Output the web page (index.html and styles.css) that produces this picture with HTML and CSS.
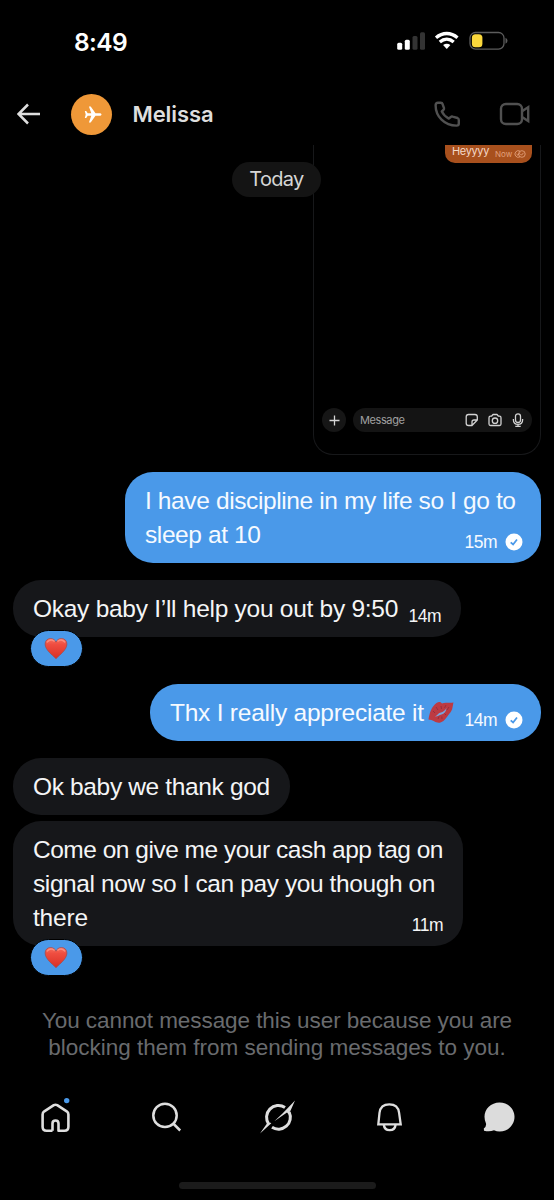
FILE: index.html
```html
<!DOCTYPE html>
<html lang="en">
<head>
<meta charset="utf-8">
<title>Melissa</title>
<link rel="stylesheet" href="styles.css">
</head>
<body>
<div class="screen">
  <div class="status">
    <span class="clock">8:49</span>
    <svg class="status-icons" width="112" height="20" viewBox="0 0 112 20">
      <rect x="1.200" y="11.800" width="5" height="7" rx="1.500" fill="#fff"/>
      <rect x="8.800" y="8.800" width="5" height="10" rx="1.500" fill="#fff"/>
      <rect x="16.500" y="5" width="5" height="13.800" rx="1.500" fill="#333"/>
      <rect x="24" y="1.300" width="5" height="17.500" rx="1.500" fill="#333"/>
      <g fill="none" stroke="#fff" stroke-width="3.300">
        <path d="M40 6.700C46.500 1.100 55 1.100 61.500 6.700"/>
        <path d="M43.800 11C48 7.300 53.500 7.300 57.700 11"/>
      </g>
      <path d="M47.100 14.100C49.500 12.200 52 12.200 54.400 14.100L50.750 18Z" fill="#fff"/>
      <rect x="74" y="1.500" width="34" height="16.600" rx="5.500" fill="none" stroke="#5c5c5c" stroke-width="1.300"/>
      <rect x="75.900" y="3.300" width="10.500" height="13" rx="3.500" fill="#fbd83c"/>
      <path d="M109.500 6.800Q111.500 7.800 111.500 9.800T109.500 12.800Z" fill="#5c5c5c"/>
    </svg>
  </div>

  <header class="header">
    <svg class="back" width="24" height="22" viewBox="0 0 24 22" fill="none" stroke="#dedede" stroke-width="2.500"><path d="M23 11H1.500M11 1.500L1.500 11L11 20.500"/></svg>
    <span class="avatar">
      <svg width="18" height="17" viewBox="0 0 18 17" fill="#fff"><path d="M17.500 8.500C17.500 7.500 16.500 7.200 15.500 7.200H11.500L6.700.6H4.900L7.300 7.200H3.700L2.200 5.100H.8L1.700 8.500L.8 11.900H2.200L3.700 9.800H7.300L4.900 16.400H6.700L11.500 9.800H15.500C16.500 9.800 17.500 9.500 17.500 8.500Z"/></svg>
    </span>
    <span class="name">Melissa</span>
    <span class="calls">
      <svg width="28" height="28" viewBox="0 0 28 28" fill="none" stroke="#505050" stroke-width="2.400" stroke-linejoin="round"><path d="M5 2.800H7.800Q9.300 2.800 9.600 4.200L11 8.200Q11.200 9.200 10.400 10L8.800 11.500Q11 16 15.800 18.600L17.800 17Q18.600 16.200 19.600 16.600L24.500 18Q25.800 18.600 25.800 20V23.500Q25.800 25.600 23.500 25.600C11.500 25.600 2.600 16.500 2.600 5.200Q2.600 2.800 5 2.800Z"/></svg>
      <svg width="31" height="24" viewBox="0 0 31 24" fill="none" stroke="#505050" stroke-width="2.400"><rect x="2" y="2" width="21" height="20" rx="4.800"/><path d="M23 9.300L29.200 5.300V19L23 15"/></svg>
    </span>
  </header>

  <main class="chat">
    <span class="day">Today</span>
    <section class="shot">
      <div class="heyyy"><span class="hey-text">Heyyyy</span><span class="hey-now">Now</span>
        <svg width="12" height="8" viewBox="0 0 12 8" fill="none" stroke="#e2a07c" stroke-width=".9"><path d="M6 1.200A3.300 3.300 0 1 0 6 6.800M2.500 4L4 5.300L6 2.500"/><circle cx="7.900" cy="4" r="3.300"/><path d="M6.400 4L7.500 5.200L9.500 2.800"/></svg>
      </div>
      <div class="composer">
        <span class="plus"><svg width="11" height="11" viewBox="0 0 11 11" stroke="#d6d6d6" stroke-width="1.300"><path d="M5.500 .5V10.500M.5 5.500H10.500"/></svg></span>
        <span class="field">Message
          <svg width="60" height="14" viewBox="0 0 60 14" fill="none" stroke="#d2d2d2" stroke-width="1.300" stroke-linejoin="round">
            <path d="M3.500 1.500H10Q12.300 1.500 12.300 3.800V7L7 12.500H3.500Q1.200 12.500 1.200 10.200V3.800Q1.200 1.500 3.500 1.500ZM12.300 7H9Q7 7 7 9V12.500"/>
            <path d="M26.500 3.200L28 1.500H32L33.500 3.200H34.500Q36 3.200 36 4.700V11Q36 12.500 34.500 12.500H25.500Q24 12.500 24 11V4.700Q24 3.200 25.500 3.200Z"/><circle cx="30" cy="7.700" r="2.700"/>
            <rect x="50.500" y=".8" width="5" height="8.700" rx="2.500"/><path d="M48.400 6V7Q48.400 11.300 53 11.300T57.600 7V6M53 11.300V13.300M50.300 13.300H55.700"/>
          </svg>
        </span>
      </div>
    </section>

    <article class="bubble sent first">
      <p class="text"><span class="line l1">I have discipline in my life so I go to</span><span class="line l2">sleep at 10</span></p>
      <span class="meta">15m <svg width="18" height="18" viewBox="0 0 18 18"><circle cx="9" cy="9" r="8.500" fill="#fff"/><path d="M5.700 9.300L8.100 11.500L12 6.500" fill="none" stroke="#4a99e9" stroke-width="1.800"/></svg></span>
    </article>

    <article class="bubble got second">
      <p class="text"><span class="line l3">Okay baby I’ll help you out by 9:50</span></p>
      <span class="meta">14m</span>
      <span class="react"><svg width="24" height="23" viewBox="0 0 26 24"><defs><linearGradient id="heart" x1="0" y1="0" x2="0" y2="1"><stop offset="0" stop-color="#f8705f"/><stop offset=".3" stop-color="#ef4d40"/><stop offset="1" stop-color="#d93025"/></linearGradient></defs><path d="M13 23C9 19 1.200 13.500 1.200 7.200C1.200 3.500 3.800 1.200 7 1.200C9.800 1.200 12.200 2.800 13 5.200C13.800 2.800 16.200 1.200 19 1.200C22.200 1.200 24.800 3.500 24.800 7.200C24.800 13.500 17 19 13 23Z" fill="url(#heart)" stroke="#a34a4c" stroke-width=".8"/><path d="M3.500 5Q7 1 11 4M15 4Q19 1 22.500 5" fill="none" stroke="#ff9e8e" stroke-width="1.500" stroke-linecap="round" opacity=".7"/></svg></span>
    </article>

    <article class="bubble sent third">
      <p class="text"><span class="line l4">Thx I really appreciate it</span></p>
      <svg class="kiss" width="26" height="23" viewBox="0 0 26 23"><path d="M.5 18.500C1.500 12 3.500 5.500 8.500 2C11 .3 13 1 14 2.500C17 .8 21 2.500 25.500 1.500C24.500 5 25 9 21.500 12.500C19 15.500 17 20 12.500 21.500C8 22.800 5 18.500 .5 18.500Z" fill="#bd3a42"/><path d="M7 15.500C9.500 14.500 10.500 11.500 13 11.500C15 11.300 17 9.500 18.500 7C18 11 16 13 13.500 13.500C11 14 9.500 15.800 7 15.500Z" fill="#7aa5dc"/><path d="M5 10L7 12M8 6L10 9M13 5L13.500 8M18 4L16.500 7M21 6L19 9M10 18L11 15.500M14 18L13.800 15.500M18 14L16.500 12.500" stroke="#8a2b3c" stroke-width=".8"/></svg>
      <span class="meta">14m <svg width="18" height="18" viewBox="0 0 18 18"><circle cx="9" cy="9" r="8.500" fill="#fff"/><path d="M5.700 9.300L8.100 11.500L12 6.500" fill="none" stroke="#4a99e9" stroke-width="1.800"/></svg></span>
    </article>

    <article class="bubble got fourth">
      <p class="text"><span class="line l5">Ok baby we thank god</span></p>
    </article>

    <article class="bubble got fifth">
      <p class="text"><span class="line l6">Come on give me your cash app tag on</span><span class="line l7">signal now so I can pay you though on</span><span class="line l8">there</span></p>
      <span class="meta">11m</span>
      <span class="react"><svg width="24" height="23" viewBox="0 0 26 24"><path d="M13 23C9 19 1.200 13.500 1.200 7.200C1.200 3.500 3.800 1.200 7 1.200C9.800 1.200 12.200 2.800 13 5.200C13.800 2.800 16.200 1.200 19 1.200C22.200 1.200 24.800 3.500 24.800 7.200C24.800 13.500 17 19 13 23Z" fill="url(#heart)" stroke="#a34a4c" stroke-width=".8"/><path d="M3.500 5Q7 1 11 4M15 4Q19 1 22.500 5" fill="none" stroke="#ff9e8e" stroke-width="1.500" stroke-linecap="round" opacity=".7"/></svg></span>
    </article>
  </main>

  <p class="notice"><span class="line n1">You cannot message this user because you are</span><span class="line n2">blocking them from sending messages to you.</span></p>

  <nav class="tabs">
    <svg width="36" height="40" viewBox="0 0 36 40"><path d="M15.500 33.700H9.600Q5.600 33.700 5.600 29.700V17.500Q5.600 15.500 7.300 14.300L16.800 8.200Q18.500 7.200 20.200 8.200L29.700 14.300Q31.400 15.500 31.400 17.500V29.700Q31.400 33.700 27.400 33.700H21.500V26.500Q21.500 23.500 18.500 23.500T15.500 26.500V33.700" fill="none" stroke="#dedede" stroke-width="2.600" stroke-linejoin="round"/><circle cx="29.700" cy="3.600" r="2.700" fill="#4a99e9"/></svg>
    <svg width="36" height="40" viewBox="0 0 36 40" fill="none" stroke="#dedede" stroke-width="2.500"><circle cx="17" cy="18.400" r="11.700"/><path d="M25.200 26.500L32.200 33.500"/></svg>
    <svg width="36" height="40" viewBox="0 0 36 40"><path d="M26 10.400A11.900 11.900 0 0 0 9.800 27.300M30.200 15.200A11.900 11.900 0 0 1 13 30.300" fill="none" stroke="#dedede" stroke-width="3"/><path d="M1 36.500L8.300 26L11.600 25.700L12.300 26.300ZM15.300 24.200L23.500 16.500L36 3.500L31.600 13.500L29.300 17L28 15.600Z" fill="#dedede"/></svg>
    <svg width="36" height="40" viewBox="0 0 36 40" fill="none" stroke="#dedede" stroke-width="2.300"><path d="M8.300 27.300L9.500 15.800Q10.600 7.400 19.300 7.400T29.100 15.800L30.700 27.300ZM13.700 27.500Q14.400 33.200 19.700 33.200T25.700 27.500"/></svg>
    <svg width="36" height="40" viewBox="0 0 36 40"><path d="M18.500 5.500C27 5.500 33.500 12 33.500 19.800C33.500 28 27 34.500 18.700 34.500Q15.500 34.500 13 33.300Q8.500 35 3 33.700L2.800 31.500Q5.600 29.500 5 26.500Q3.500 23.500 3.500 19.800C3.500 12 10 5.500 18.500 5.500Z" fill="#dcdcdc"/></svg>
  </nav>
  <div class="home-bar"></div>
</div>
</body>
</html>
```
FILE: styles.css
```css
* { box-sizing: border-box; }
body { margin: 0; background: #000; }
.screen {
  width: 554px; height: 1200px; overflow: hidden;
  display: flex; flex-direction: column;
  background: #000; color: #f4f5f6;
  font-family: "Liberation Sans", Arial, sans-serif;
}
svg { display: block; flex: none; }
.status {
  height: 84px; flex: none; padding: 0 46px 2px 74px;
  display: flex; align-items: center; justify-content: space-between;
}
.clock { padding-top: 1px; font: 600 24.5px/30px Inter, sans-serif; color: #fff; letter-spacing: -.6px; }
.header {
  height: 61px; flex: none; padding: 0 24px 1px 17px;
  display: flex; align-items: center;
}
.avatar {
  width: 41px; height: 41px; margin-left: 30px; border-radius: 50%;
  display: flex; align-items: center; justify-content: center;
  padding-left: 2px; background: #ef9838;
}
.name { margin-left: 20.5px; font: 600 22px/28px Inter, sans-serif; color: #dedede; letter-spacing: -.1px; }
.calls { margin-left: auto; display: flex; align-items: center; gap: 38px; }

.chat {
  position: relative; height: 837px; flex: none; padding: 0 13px;
  display: flex; flex-direction: column; align-items: flex-start;
}
.day {
  position: absolute; left: 232px; top: 17px; z-index: 2;
  width: 89px; height: 35px; border-radius: 18px; background: #141414;
  color: #d6d6d6; font: 400 20px/35px Inter, sans-serif; text-align: center;
  letter-spacing: -.7px;
}
.shot {
  align-self: flex-end; width: 228px; height: 310px; padding: 0 8px 22px;
  display: flex; flex-direction: column; justify-content: space-between;
  border: 1px solid #17181a; border-top: 0; border-radius: 0 0 20px 20px;
}
.heyyy {
  align-self: flex-end; width: 87px; height: 18px; padding: 0 6px 0 7px;
  display: flex; border-radius: 0 0 10px 10px; background: #a8501d;
  font-family: Inter, sans-serif; color: #f4d9ca;
}
.hey-text { font-size: 11px; line-height: 13px; width: 43px; letter-spacing: -.35px; }
.hey-now { font-size: 8px; line-height: 19px; width: 19px; color: #e2a07c; }
.heyyy svg { margin-top: 5px; }
.composer { display: flex; gap: 7px; height: 24px; }
.plus {
  width: 24px; height: 24px; border-radius: 50%; background: #161616;
  display: flex; align-items: center; justify-content: center;
}
.field {
  width: 179px; height: 24px; border-radius: 12px; background: #141414;
  padding: 0 7px; display: flex; align-items: center; justify-content: space-between;
  color: #a0a0a0; font: 11px/22px Inter, sans-serif; letter-spacing: -.4px;
}

.bubble {
  position: relative; flex: none; height: 57px; padding: 12px 20px 11px;
  border-radius: 28px; display: flex;
}
.sent { align-self: flex-end; background: #4a99e9; color: #f6faff; }
.got { background: #16171a; }
.first { width: 416px; height: 91px; margin-top: 17px; }
.second { width: 448px; margin-top: 17px; }
.third { width: 391px; margin-top: 47px; }
.fourth { width: 277px; margin-top: 17px; }
.fifth { width: 450px; height: 125px; margin-top: 6px; }
.text { margin: 0; font-size: 24.5px; line-height: 34px; }
.line { display: block; white-space: nowrap; }
.meta {
  position: absolute; right: 20px; bottom: 9px;
  display: flex; align-items: center; gap: 8px;
  font-size: 17.5px; line-height: 24px; letter-spacing: -.5px;
}
.sent .meta { right: 18px; }
.kiss { margin: 5px 0 0 4px; }
.react {
  position: absolute; left: 17px; bottom: -30px; width: 53px; height: 37px;
  border: 1px solid #000; border-radius: 19px; background: #4a99e9;
  display: flex; align-items: center; justify-content: center; padding: 0 2px 1px 0;
}
.l1 { letter-spacing: -.38px; }
.l2 { letter-spacing: -.4px; }
.l3 { letter-spacing: -.27px; }
.l4 { letter-spacing: -.24px; }
.l5 { letter-spacing: -.35px; }
.l6 { letter-spacing: -.49px; }
.l7 { letter-spacing: -.4px; }
.l8 { letter-spacing: -.2px; }

.notice {
  margin: 0; padding-top: 25px; height: 112px; flex: none;
  text-align: center; color: #696b6e; font-size: 22.5px; line-height: 27px;
}
.n1 { letter-spacing: -.07px; }
.tabs {
  height: 40px; flex: none; padding: 0 37px;
  margin-top: 3px; display: flex; justify-content: space-between;
}
.home-bar {
  width: 197px; height: 7px; flex: none; margin: 45px 0 0 179px;
  border-radius: 4px; background: #1b1b1b;
}
```
